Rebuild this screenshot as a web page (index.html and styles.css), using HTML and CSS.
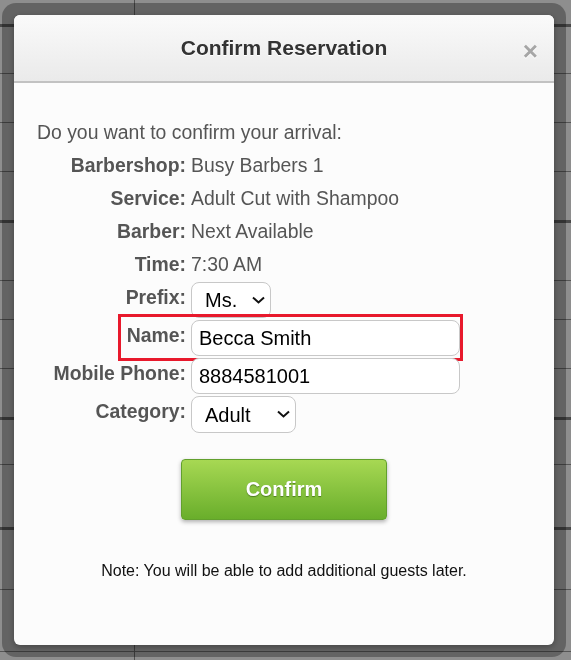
FILE: index.html
```html
<!DOCTYPE html>
<html lang="en">
<head>
  <meta charset="UTF-8">
  <meta name="viewport" content="width=device-width, initial-scale=1.0">
  <title>Confirm Reservation</title>
  <link rel="stylesheet" href="styles.css">
</head>
<body>
  <div class="schedule">
    <div class="slot first"></div>
    <div class="slot hour"></div>
    <div class="slot"></div>
    <div class="slot"></div>
    <div class="slot"></div>
    <div class="slot hour tall"></div>
    <div class="slot short"></div>
    <div class="slot"></div>
    <div class="slot"></div>
    <div class="slot hour short2"></div>
    <div class="slot tall2"></div>
    <div class="slot hour tall3"></div>
    <div class="slot tall3"></div>
    <div class="slot"></div>
    <div class="col-line"></div>
  </div>

  <div class="overlay">
    <div class="frame">
      <div class="modal">
        <div class="modal-header">
          <h2>Confirm Reservation</h2>
          <span class="close">&times;</span>
        </div>
        <div class="modal-body">
          <p class="intro">Do you want to confirm your arrival:</p>
          <div class="details">
            <label>Barbershop:</label><span>Busy Barbers 1</span>
            <label>Service:</label><span>Adult Cut with Shampoo</span>
            <label>Barber:</label><span>Next Available</span>
            <label>Time:</label><span>7:30 AM</span>
          </div>
          <div class="fields">
            <div class="field">
              <label for="prefix">Prefix:</label>
              <span class="select-wrap">
                <select id="prefix" class="prefix">
                  <option>Ms.</option>
                  <option>Mr.</option>
                  <option>Mrs.</option>
                </select>
                <svg class="chevron" width="13" height="8" viewBox="0 0 13 8"><path d="M1 1.5l5.5 5 5.5-5" fill="none" stroke="#111" stroke-width="2"/></svg>
              </span>
            </div>
            <div class="field highlight">
              <label for="name">Name:</label>
              <input id="name" type="text" value="Becca Smith">
            </div>
            <div class="field">
              <label for="phone">Mobile Phone:</label>
              <input id="phone" type="text" value="8884581001">
            </div>
            <div class="field">
              <label for="category">Category:</label>
              <span class="select-wrap">
                <select id="category" class="category">
                  <option>Adult</option>
                  <option>Child</option>
                  <option>Senior</option>
                </select>
                <svg class="chevron" width="13" height="8" viewBox="0 0 13 8"><path d="M1 1.5l5.5 5 5.5-5" fill="none" stroke="#111" stroke-width="2"/></svg>
              </span>
            </div>
          </div>
          <div class="actions">
            <button class="confirm-btn">Confirm</button>
          </div>
          <p class="note">Note: You will be able to add additional guests later.</p>
        </div>
      </div>
    </div>
  </div>
</body>
</html>
```

FILE: styles.css
```css
body {
  margin: 0;
  padding: 0;
  background: #8e8e8e;
  font-family: 'Liberation Sans', Arial, sans-serif;
  overflow: hidden;
}
.schedule {
  position: relative;
  height: 660px;
  overflow: hidden;
}
.slot {
  height: 49px;
  border-top: 1px solid #555;
  box-sizing: border-box;
}
.slot.first {
  height: 24px;
  border-top: none;
}
.slot.hour {
  border-top: 3px solid #484848;
}
.slot.tall { height: 60px; }
.slot.short { height: 39px; }
.slot.short2 { height: 47px; }
.slot.tall2 { height: 63px; }
.slot.tall3 { height: 62px; }
.col-line {
  position: absolute;
  top: 0;
  bottom: 0;
  left: 134px;
  border-left: 1px solid #505050;
}
.overlay {
  position: fixed;
  inset: 0;
  padding: 3px 5px 3px 2px;
}
.frame {
  width: 540px;
  height: 630px;
  padding: 12px;
  border-radius: 14px;
  background: rgba(0, 0, 0, 0.3);
}
.modal {
  height: 100%;
  background: #fcfcfc;
  border-radius: 6px;
  overflow: hidden;
  box-shadow: 0 2px 6px rgba(0, 0, 0, 0.3);
}
.modal-header {
  position: relative;
  height: 66px;
  background: linear-gradient(to bottom, #fafafa, #eaeaea);
  border-bottom: 2px solid #c2c2c2;
  text-align: center;
}
.modal-header h2 {
  margin: 0;
  line-height: 66px;
  font-size: 21px;
  font-weight: bold;
  color: #333;
  text-shadow: 0 1px 0 #fff;
}
.close {
  position: absolute;
  right: 16px;
  top: 21px;
  font-size: 26px;
  line-height: 30px;
  font-weight: bold;
  color: #a6a6a6;
  text-shadow: 0 1px 0 #fff;
}
.modal-body {
  padding: 33px 23px 0;
  color: #555;
  font-size: 19.4px;
}
.intro {
  margin: 0;
  line-height: 33px;
}
.details {
  display: grid;
  grid-template-columns: 149px 1fr;
  column-gap: 5px;
  line-height: 33px;
}
.details label, .field label {
  font-weight: bold;
  text-align: right;
}
.fields {
  display: flex;
  flex-direction: column;
  gap: 2px;
  margin-top: 1px;
}
.field {
  position: relative;
  display: grid;
  grid-template-columns: 149px auto;
  column-gap: 5px;
  align-items: start;
  justify-content: start;
}
.field label {
  line-height: 30px;
}
.field.highlight::after {
  content: "";
  position: absolute;
  left: 81px;
  top: -6px;
  width: 339px;
  height: 41px;
  border: 3px solid #e8192c;
}
.field input, .field select {
  box-sizing: border-box;
  display: block;
  height: 36px;
  font-family: 'Liberation Sans', Arial, sans-serif;
  font-size: 20px;
  color: #000;
  background: #fff;
  border: 1px solid #c8c8c8;
  border-radius: 8px;
  outline: none;
}
.field input {
  width: 269px;
  padding: 0 7px;
}
.select-wrap {
  position: relative;
  display: block;
}
.field select {
  appearance: none;
  -webkit-appearance: none;
  padding: 0 24px 0 13px;
}
.chevron {
  position: absolute;
  top: 14px;
  pointer-events: none;
}
.field select.prefix {
  width: 80px;
}
.prefix + .chevron {
  left: 61px;
}
.field select.category {
  width: 105px;
  height: 37px;
}
.category + .chevron {
  left: 86px;
}
.actions {
  margin-top: 26px;
  text-align: center;
}
.confirm-btn {
  width: 206px;
  height: 61px;
  font-family: 'Liberation Sans', Arial, sans-serif;
  font-size: 20px;
  font-weight: bold;
  color: #fff;
  text-shadow: 0 1px 1px rgba(40, 80, 10, 0.6);
  background: linear-gradient(to bottom, #a7d853, #69ae2b);
  border: 1px solid #62a02d;
  border-radius: 4px;
  box-shadow: 0 2px 4px rgba(0, 0, 0, 0.3);
  cursor: pointer;
}
.note {
  margin: 42px 0 0;
  text-align: center;
  font-size: 16px;
  line-height: 18px;
  color: #111;
}
```
